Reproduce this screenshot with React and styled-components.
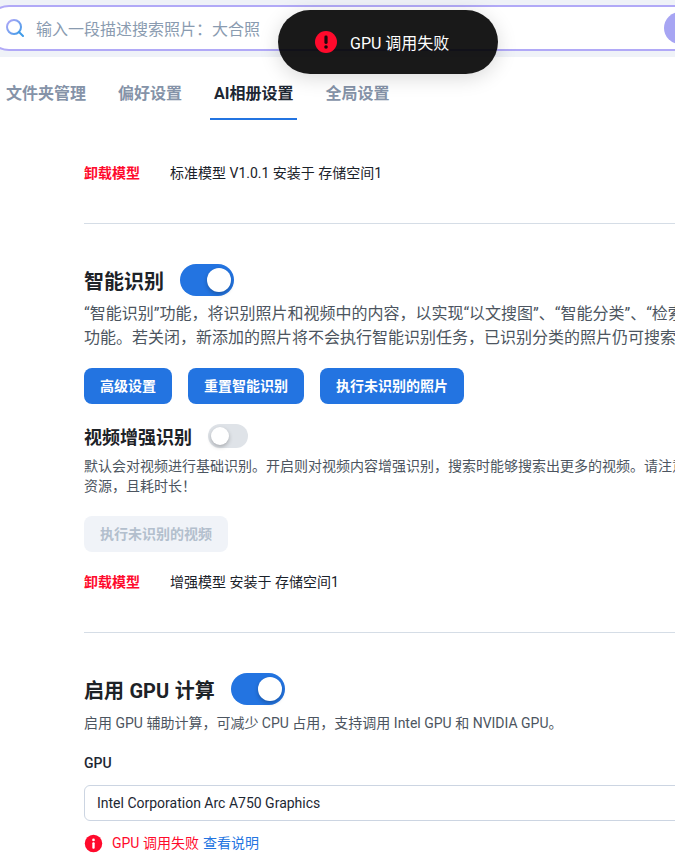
import React from "react";
import styled, { createGlobalStyle } from "styled-components";

const Global = createGlobalStyle`
  html, body { margin: 0; padding: 0; background: #fff; overflow: hidden; }
  body { font-family: Roboto, "Noto Sans CJK SC", sans-serif; }
`;
const Page = styled.div`
  position: relative;
  width: 675px;
  height: 857px;
  overflow: hidden;
  background: #fff;
`;
const SearchStrip = styled.div`
  height: 57px;
  box-sizing: border-box;
  padding-top: 5px;
  background: #eff2f8;
  overflow: hidden;
`;
const SearchBox = styled.div`
  width: 760px;
  height: 46px;
  margin-left: -14px;
  box-sizing: border-box;
  display: flex;
  align-items: center;
  gap: 12px;
  padding-left: 18px;
  border: 2px solid #b1a9f7;
  border-radius: 23px;
  background: #fff;
`;
const SearchIcon = styled.svg`
  width: 18px;
  height: 18px;
  flex: none;
`;
const Placeholder = styled.span`
  font-size: 16px;
  color: #8a9bb0;
  flex: 1;
`;
const SearchGo = styled.span`
  width: 32px;
  height: 32px;
  border-radius: 50%;
  background: #a7a5f3;
  margin-right: 48px;
`;
const Tabs = styled.nav`
  display: flex;
  gap: 32px;
  height: 63px;
  padding-left: 6px;
  box-sizing: border-box;
`;
const Tab = styled.a`
  display: block;
  position: relative;
  height: 63px;
  box-sizing: border-box;
  padding-top: 25px;
  line-height: 24px;
  font-size: 16px;
  font-weight: 700;
  color: ${(p) => (p.$active ? "#1d2733" : "#8593a8")};
  ${(p) =>
    p.$active &&
    `&::after { content: ""; position: absolute; left: -4px; right: -4px; bottom: 0; height: 2px; background: #2374e1; }`}
`;
const Content = styled.main`
  width: 760px;
  margin-left: 84px;
`;
const ModelRow = styled.div`
  display: flex;
  align-items: center;
  gap: 30px;
  height: 20px;
  box-sizing: border-box;
  padding-bottom: 2px;
  font-size: 14px;
  color: #1a2129;
  margin-top: ${(p) => p.$top}px;
`;
const Unload = styled.a`
  color: #ff0a2c;
  font-weight: 700;
`;
const Rule = styled.hr`
  border: 0;
  height: 1px;
  background: #d5dde6;
  margin: ${(p) => p.$top}px 0 0;
`;
const HeadRow = styled.div`
  display: flex;
  align-items: center;
  gap: 16px;
  height: ${(p) => p.$height || 34}px;
  margin-top: ${(p) => p.$top}px;
`;
const Title = styled.h2`
  margin: 0;
  padding-top: 3px;
  font-size: 20px;
  line-height: 28px;
  font-weight: 700;
  word-spacing: 0.5px;
  color: #1d2227;
`;
const SubTitle = styled.h3`
  margin: 0;
  padding-top: 3px;
  font-size: 18px;
  line-height: 24px;
  font-weight: 700;
  color: #1d2227;
`;
const Toggle = styled.span`
  position: relative;
  flex: none;
  display: block;
  width: ${(p) => (p.$small ? 40 : 54)}px;
  height: ${(p) => (p.$small ? 24 : 32)}px;
  border-radius: 16px;
  background: ${(p) => (p.$on ? "#2374e1" : "#dfe3e8")};
  &::after {
    content: "";
    position: absolute;
    top: ${(p) => (p.$small ? 3 : 4)}px;
    left: ${(p) => (p.$on ? 27 : 3)}px;
    width: ${(p) => (p.$small ? 18 : 24)}px;
    height: ${(p) => (p.$small ? 18 : 24)}px;
    border-radius: 50%;
    background: #fff;
    box-shadow: 0 2px 4px rgba(0, 0, 0, 0.25);
  }
`;
const Desc = styled.p`
  margin: ${(p) => p.$top || 0}px 0 0;
  font-size: ${(p) => p.$size || 14}px;
  line-height: ${(p) => p.$line || 20}px;
  color: #4c5560;
  white-space: nowrap;
`;
const Buttons = styled.div`
  display: flex;
  gap: 16px;
  margin-top: ${(p) => p.$top}px;
`;
const Button = styled.button`
  height: 36px;
  padding: 0 16px 2px;
  border: 0;
  border-radius: 8px;
  font-family: inherit;
  font-size: 14px;
  font-weight: 700;
  color: ${(p) => (p.disabled ? "#b3bfcd" : "#fff")};
  background: ${(p) => (p.disabled ? "#f0f3f8" : "#2374e1")};
`;
const FieldLabel = styled.div`
  margin-top: 20px;
  font-size: 14px;
  line-height: 20px;
  font-weight: 500;
  color: #1d2733;
`;
const Select = styled.div`
  height: 36px;
  box-sizing: border-box;
  margin-top: 12px;
  padding-left: 12px;
  display: flex;
  align-items: center;
  border: 1px solid #ccd5e2;
  border-radius: 6px;
  font-size: 14px;
  color: #1d2733;
`;
const ErrorRow = styled.div`
  display: flex;
  align-items: center;
  gap: 9px;
  margin-top: 12px;
  font-size: 14px;
  line-height: 20px;
  color: #ff0a2c;
`;
const Link = styled.a`
  color: #2374e1;
  margin-left: 4px;
`;
const Toast = styled.div`
  position: absolute;
  left: 278px;
  top: 10px;
  width: 220px;
  height: 64px;
  border-radius: 32px;
  background: rgba(0, 0, 0, 0.9);
  box-shadow: 0 4px 20px rgba(0, 0, 0, 0.15);
  display: flex;
  align-items: center;
  gap: 12px;
  padding-left: 36px;
  box-sizing: border-box;
  font-size: 16px;
  color: #fff;
`;

const Alert = ({ size = 24, mark = "!" }) => (
  <svg width={size} height={size} viewBox="0 0 24 24" style={{ flex: "none" }}>
    <circle cx="12" cy="12" r="11" fill="#ff0a2c" />
    {mark === "!" ? (
      <>
        <rect x="10.4" y="5.5" width="3.2" height="8.5" rx="1.4" fill="#1a0a0c" />
        <circle cx="12" cy="17" r="1.8" fill="#1a0a0c" />
      </>
    ) : (
      <>
        <circle cx="12" cy="7.5" r="1.7" fill="#fff" />
        <rect x="10.5" y="10.5" width="3" height="8" rx="1.2" fill="#fff" />
      </>
    )}
  </svg>
);

export default function App() {
  return (
    <Page>
      <Global />
      <SearchStrip>
        <SearchBox>
          <SearchIcon viewBox="0 0 18 18" fill="none" strokeWidth="2">
            <defs>
              <linearGradient id="lens" x1="0" y1="0" x2="1" y2="1">
                <stop offset="0" stopColor="#b4a8f8" />
                <stop offset="1" stopColor="#3f9be8" />
              </linearGradient>
            </defs>
            <circle cx="8" cy="8" r="7" stroke="url(#lens)" />
            <path d="M13 13l4 4" stroke="#3f9be8" strokeLinecap="round" />
          </SearchIcon>
          <Placeholder>输入一段描述搜索照片：大合照</Placeholder>
          <SearchGo />
        </SearchBox>
      </SearchStrip>
      <Tabs>
        <Tab>文件夹管理</Tab>
        <Tab>偏好设置</Tab>
        <Tab $active>AI相册设置</Tab>
        <Tab>全局设置</Tab>
      </Tabs>
      <Content>
        <ModelRow $top={43}>
          <Unload>卸载模型</Unload>
          <span>标准模型 V1.0.1 安装于 存储空间1</span>
        </ModelRow>
        <Rule $top={40} />
        <HeadRow $top={39}>
          <Title>智能识别</Title>
          <Toggle $on />
        </HeadRow>
        <Desc $size={16} $line={24} $top={5}>
          “智能识别”功能，将识别照片和视频中的内容，以实现“以文搜图”、“智能分类”、“检索
          <br />
          功能。若关闭，新添加的照片将不会执行智能识别任务，已识别分类的照片仍可搜索
        </Desc>
        <Buttons $top={18}>
          <Button>高级设置</Button>
          <Button>重置智能识别</Button>
          <Button>执行未识别的照片</Button>
        </Buttons>
        <HeadRow $top={20} $height={24}>
          <SubTitle>视频增强识别</SubTitle>
          <Toggle $small />
        </HeadRow>
        <Desc $top={8}>
          默认会对视频进行基础识别。开启则对视频内容增强识别，搜索时能够搜索出更多的视频。请注意
          <br />
          资源，且耗时长！
        </Desc>
        <Buttons $top={20}>
          <Button disabled>执行未识别的视频</Button>
        </Buttons>
        <ModelRow $top={20}>
          <Unload>卸载模型</Unload>
          <span>增强模型 安装于 存储空间1</span>
        </ModelRow>
        <Rule $top={40} />
        <HeadRow $top={39}>
          <Title>启用 GPU 计算</Title>
          <Toggle $on />
        </HeadRow>
        <Desc $top={7}>启用 GPU 辅助计算，可减少 CPU 占用，支持调用 Intel GPU 和 NVIDIA GPU。</Desc>
        <FieldLabel>GPU</FieldLabel>
        <Select>Intel Corporation Arc A750 Graphics</Select>
        <ErrorRow>
          <Alert size={19} mark="i" />
          <span>
            GPU 调用失败<Link>查看说明</Link>
          </span>
        </ErrorRow>
      </Content>
      <Toast>
        <Alert />
        <span>GPU 调用失败</span>
      </Toast>
    </Page>
  );
}
